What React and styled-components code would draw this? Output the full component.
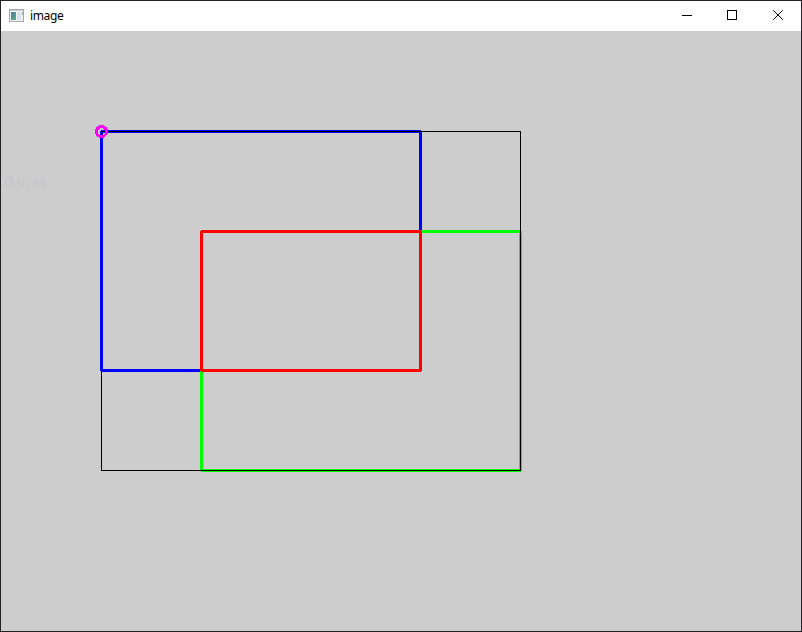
import React from "react";
import styled, { createGlobalStyle } from "styled-components";

const GlobalStyle = createGlobalStyle`
  * { box-sizing: border-box; }
  html, body { margin: 0; padding: 0; overflow: hidden; }
`;

const Window = styled.div`
  display: flex;
  flex-direction: column;
  width: 802px;
  height: 632px;
  border: 1px solid #242224;
  background: #cdcdcd;
`;

const TitleBar = styled.header`
  display: flex;
  align-items: center;
  flex: 0 0 30px;
  padding-left: 8px;
  background: #fff;
`;

const AppIcon = styled.svg`
  display: block;
  width: 16px;
  height: 16px;
  margin-bottom: 2px;
`;

const Title = styled.h1`
  flex: 1;
  margin: 0 0 0 5px;
  font: 400 12px/16px "Noto Sans", "Open Sans", sans-serif;
  letter-spacing: -0.35px;
  color: #000;
`;

const Controls = styled.div`
  display: flex;
  height: 30px;
  width: 138px;
`;

const ControlButton = styled.button`
  flex: 0 0 ${(p) => p.$width}px;
  height: 30px;
  padding: 0 0 0 ${(p) => p.$inset}px;
  border: 0;
  background: transparent;
`;

const Glyph = styled.svg`
  display: block;
  width: 12px;
  height: 12px;
  fill: none;
  stroke: #000;
`;

const Viewport = styled.main`
  position: relative;
  flex: 1;
`;

const Drawing = styled.svg`
  display: block;
  width: 800px;
  height: 600px;
`;

const FadedLabel = styled.span`
  position: absolute;
  left: 2px;
  top: 144px;
  font: 400 12px/16px "Open Sans", "Noto Sans CJK KR", sans-serif;
  letter-spacing: 0.45px;
  color: #c5c6c8;
`;

const Outline = ({ x1, y1, x2, y2, color, width }) => (
  <path
    d={`M${x1} ${y1 + 0.5}H${x2 + 1}M${x1} ${y2 + 0.5}H${x2 + 1}M${x1 + 0.5} ${y1}V${y2 + 1}M${x2 + 0.5} ${y1}V${y2 + 1}`}
    stroke={color}
    strokeWidth={width}
    fill="none"
  />
);

const shapes = [
  { x1: 100, y1: 100, x2: 419, y2: 339, color: "#0000ff", width: 3 },
  { x1: 200, y1: 200, x2: 519, y2: 439, color: "#00ff00", width: 3 },
  { x1: 200, y1: 200, x2: 419, y2: 339, color: "#ff0000", width: 3 },
  { x1: 100, y1: 100, x2: 519, y2: 439, color: "#000000", width: 1 },
];

export default function App() {
  return (
    <>
      <GlobalStyle />
      <Window>
        <TitleBar>
          <AppIcon viewBox="0 0 16 16" shapeRendering="crispEdges">
            <defs>
              <linearGradient id="pane" x1="0" y1="0" x2="1" y2="1">
                <stop offset="0" stopColor="#4c7aa5" />
                <stop offset="1" stopColor="#5fae7c" />
              </linearGradient>
            </defs>
            <path fill="#a5a9ad" d="M0 2H15V15H0Z" />
            <path fill="#f1f2f3" d="M1 3H14V14H1Z" />
            <path fill="#c9ced4" d="M1 3H14V4H1Z" />
            <path fill="url(#pane)" d="M2 5H7V13H2Z" />
            <path fill="#dde1e6" d="M8 5H12V13H8Z" />
            <path fill="#8dafa4" d="M13 5H14V8H13Z" />
          </AppIcon>
          <Title>image</Title>
          <Controls>
            <ControlButton $width={46} $inset={19} aria-label="Minimize">
              <Glyph viewBox="0 0 12 12" shapeRendering="crispEdges">
                <path d="M0 5.5H10" />
              </Glyph>
            </ControlButton>
            <ControlButton $width={46} $inset={18} aria-label="Maximize">
              <Glyph viewBox="0 0 12 12" shapeRendering="crispEdges">
                <path d="M0.5 0.5H9.5V9.5H0.5Z" />
              </Glyph>
            </ControlButton>
            <ControlButton $width={46} $inset={18} aria-label="Close">
              <Glyph viewBox="0 0 12 12">
                <path d="M0.2 0.2L9.8 9.8M9.8 0.2L0.2 9.8" strokeWidth="1" />
              </Glyph>
            </ControlButton>
          </Controls>
        </TitleBar>
        <Viewport>
          <Drawing viewBox="0 0 800 600" shapeRendering="crispEdges">
            {shapes.map((s, i) => (
              <Outline key={i} {...s} />
            ))}
            <circle cx="100.5" cy="100.5" r="5" fill="none" stroke="#ff00ff" strokeWidth="3" />
          </Drawing>
          <FadedLabel>캡처(W)</FadedLabel>
        </Viewport>
      </Window>
    </>
  );
}
